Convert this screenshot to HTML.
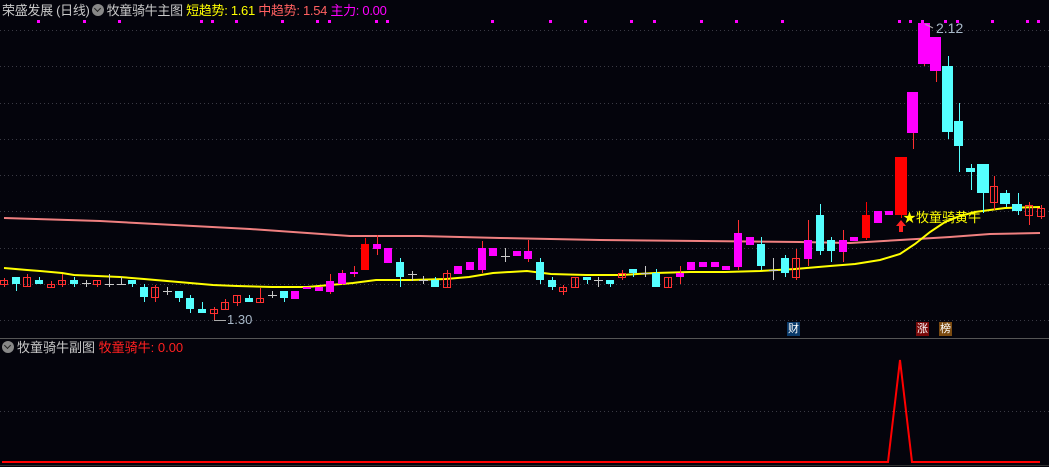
<!DOCTYPE html>
<html><head><meta charset="utf-8"><style>
html,body{margin:0;padding:0;background:#04040c;}
body{width:1049px;height:467px;overflow:hidden;position:relative;font-family:"Liberation Sans","Noto Sans CJK SC",sans-serif;}
.t{position:absolute;font-size:13px;white-space:nowrap;line-height:15px}
.ic{display:inline-block;width:12px;height:12px;border-radius:50%;background:#888;vertical-align:-1px;margin:0 3px 0 2px;position:relative}
.ic:after{content:"";position:absolute;left:3px;top:2px;width:4px;height:4px;border-right:1.5px solid #222;border-bottom:1.5px solid #222;transform:rotate(45deg)}
.mk{position:absolute;width:13px;height:14px;font-size:11px;line-height:14px;text-align:center;color:#fff}
</style></head><body>
<svg width="1049" height="467" style="position:absolute;left:0;top:0">
<g stroke="#3a3a44" stroke-dasharray="1,3" stroke-width="1">
<line x1="0" x2="1049" y1="30.5" y2="30.5"/><line x1="0" x2="1049" y1="66.5" y2="66.5"/><line x1="0" x2="1049" y1="103.5" y2="103.5"/><line x1="0" x2="1049" y1="139.5" y2="139.5"/><line x1="0" x2="1049" y1="175.5" y2="175.5"/><line x1="0" x2="1049" y1="211.5" y2="211.5"/><line x1="0" x2="1049" y1="248.5" y2="248.5"/><line x1="0" x2="1049" y1="284.5" y2="284.5"/><line x1="0" x2="1049" y1="320.5" y2="320.5"/><line x1="0" x2="1049" y1="411.5" y2="411.5"/>
</g>
<line x1="0" x2="1049" y1="338.5" y2="338.5" stroke="#555"/>
<line x1="0" x2="1049" y1="465.5" y2="465.5" stroke="#333"/>
<g fill="#ff00ff">
<rect x="37" y="20" width="3" height="3"/><rect x="83" y="20" width="3" height="3"/><rect x="118" y="20" width="3" height="3"/><rect x="200" y="20" width="3" height="3"/><rect x="211" y="20" width="3" height="3"/><rect x="235" y="20" width="3" height="3"/><rect x="281" y="20" width="3" height="3"/><rect x="316" y="20" width="3" height="3"/><rect x="328" y="20" width="3" height="3"/><rect x="375" y="20" width="3" height="3"/><rect x="386" y="20" width="3" height="3"/><rect x="491" y="20" width="3" height="3"/><rect x="549" y="20" width="3" height="3"/><rect x="584" y="20" width="3" height="3"/><rect x="630" y="20" width="3" height="3"/><rect x="653" y="20" width="3" height="3"/><rect x="700" y="20" width="3" height="3"/><rect x="735" y="20" width="3" height="3"/><rect x="781" y="20" width="3" height="3"/><rect x="898" y="20" width="3" height="3"/><rect x="909" y="20" width="3" height="3"/><rect x="921" y="20" width="3" height="3"/><rect x="944" y="20" width="3" height="3"/><rect x="956" y="20" width="3" height="3"/><rect x="991" y="20" width="3" height="3"/><rect x="1026" y="20" width="3" height="3"/><rect x="1037" y="20" width="3" height="3"/>
</g>
<polyline fill="none" stroke="#f08080" stroke-width="2" points="4,218 100,221 250,229 350,236 420,236 500,238 600,240 700,241 800,242 850,243 900,240 950,237 990,234 1040,233"/>
<polyline fill="none" stroke="#ffff00" stroke-width="2" points="4,268 27,270 40,271 62,273 74,275 97,276 120,277 144,279 167,281 190,283 213,285 237,286 272,287 307,287 330,285 353,283 376,280 411,280 446,279 469,277 493,273 527,271 551,274 586,275 621,275 655,273 690,272 725,272 760,271 795,269 830,266 855,264 880,260 900,254 915,244 930,232 945,222 960,216 975,212 990,210 1005,208 1040,207"/>
<g stroke-width="1">
<g stroke="#ff3030" fill="none">
<line x1="4.5" x2="4.5" y1="278" y2="287"/><rect x="0.5" y="280.5" width="7" height="4"/>
<line x1="27.5" x2="27.5" y1="274" y2="287"/><rect x="23.5" y="277.5" width="7" height="9"/>
<line x1="51.5" x2="51.5" y1="281" y2="287"/><rect x="47.5" y="284.5" width="7" height="3"/>
<line x1="62.5" x2="62.5" y1="274" y2="287"/><rect x="58.5" y="280.5" width="7" height="4"/>
<line x1="97.5" x2="97.5" y1="280" y2="287"/><rect x="93.5" y="280.5" width="7" height="4"/>
<line x1="155.5" x2="155.5" y1="285" y2="302"/><rect x="151.5" y="287.5" width="7" height="10"/>
<line x1="214.5" x2="214.5" y1="307" y2="320"/><rect x="210.5" y="309.5" width="7" height="4"/>
<line x1="225.5" x2="225.5" y1="299" y2="309"/><rect x="221.5" y="302.5" width="7" height="7"/>
<line x1="237.5" x2="237.5" y1="295" y2="306"/><rect x="233.5" y="295.5" width="7" height="7"/>
<line x1="260.5" x2="260.5" y1="288" y2="302"/><rect x="256.5" y="298.5" width="7" height="4"/>
<line x1="447.5" x2="447.5" y1="270" y2="287"/><rect x="443.5" y="273.5" width="7" height="14"/>
<line x1="563.5" x2="563.5" y1="285" y2="295"/><rect x="559.5" y="287.5" width="7" height="4"/>
<line x1="575.5" x2="575.5" y1="277" y2="287"/><rect x="571.5" y="277.5" width="7" height="10"/>
<line x1="622.5" x2="622.5" y1="270" y2="280"/><rect x="618.5" y="273.5" width="7" height="4"/>
<line x1="668.5" x2="668.5" y1="277" y2="287"/><rect x="664.5" y="277.5" width="7" height="10"/>
<line x1="796.5" x2="796.5" y1="249" y2="280"/><rect x="792.5" y="258.5" width="7" height="19"/>
<line x1="994.5" x2="994.5" y1="176" y2="210"/><rect x="990.5" y="186.5" width="7" height="16"/>
<line x1="1029.5" x2="1029.5" y1="202" y2="225"/><rect x="1025.5" y="205.5" width="7" height="10"/>
<line x1="1041.5" x2="1041.5" y1="205" y2="219"/><rect x="1037.5" y="208.5" width="7" height="8"/>
</g>
<g stroke="#ff0000" fill="#ff0000">
<line x1="365.5" x2="365.5" y1="238" y2="270"/><rect x="361.5" y="244.5" width="7" height="25"/>
<line x1="866.5" x2="866.5" y1="202" y2="240"/><rect x="862.5" y="215.5" width="7" height="22"/>
<line x1="901.5" x2="901.5" y1="157" y2="218"/><rect x="895.5" y="157.5" width="11" height="57"/>
</g>
<g stroke="#ff3030"><line x1="342.5" x2="342.5" y1="270" y2="285"/><line x1="377.5" x2="377.5" y1="235" y2="255"/><line x1="482.5" x2="482.5" y1="241" y2="273"/><line x1="528.5" x2="528.5" y1="240" y2="262"/><line x1="680.5" x2="680.5" y1="266" y2="284"/><line x1="738.5" x2="738.5" y1="220" y2="270"/><line x1="808.5" x2="808.5" y1="220" y2="266"/><line x1="843.5" x2="843.5" y1="230" y2="262"/><line x1="913.5" x2="913.5" y1="130" y2="149"/><line x1="924.5" x2="924.5" y1="60" y2="66"/><line x1="936.5" x2="936.5" y1="68" y2="82"/><line x1="330.5" x2="330.5" y1="274" y2="294"/><line x1="354.5" x2="354.5" y1="266" y2="277"/></g>
<g fill="#ff00ff" stroke="none">
<rect x="291" y="291" width="8" height="8"/><rect x="303" y="287" width="8" height="2"/><rect x="315" y="287" width="8" height="4"/><rect x="326" y="281" width="8" height="11"/><rect x="338" y="273" width="8" height="11"/><rect x="350" y="272" width="8" height="2"/><rect x="373" y="244" width="8" height="5"/><rect x="384" y="248" width="8" height="15"/>
<rect x="454" y="266" width="8" height="8"/><rect x="466" y="262" width="8" height="8"/><rect x="478" y="248" width="8" height="22"/><rect x="489" y="248" width="8" height="8"/><rect x="513" y="251" width="8" height="5"/><rect x="524" y="251" width="8" height="8"/>
<rect x="676" y="273" width="8" height="4"/><rect x="687" y="262" width="8" height="8"/><rect x="699" y="262" width="8" height="5"/><rect x="711" y="262" width="8" height="5"/><rect x="722" y="266" width="8" height="4"/><rect x="734" y="233" width="8" height="34"/><rect x="746" y="237" width="8" height="8"/><rect x="804" y="240" width="8" height="19"/><rect x="839" y="240" width="8" height="12"/><rect x="850" y="237" width="8" height="4"/><rect x="874" y="211" width="8" height="12"/><rect x="885" y="211" width="8" height="4"/><rect x="907" y="92" width="11" height="41"/><rect x="918" y="23" width="12" height="41"/><rect x="930" y="37" width="11" height="34"/>
</g>
<g stroke="#55ffff"><line x1="16.5" x2="16.5" y1="277" y2="291"/><line x1="39.5" x2="39.5" y1="277" y2="284"/><line x1="74.5" x2="74.5" y1="277" y2="287"/><line x1="132.5" x2="132.5" y1="280" y2="287"/><line x1="144.5" x2="144.5" y1="284" y2="302"/><line x1="179.5" x2="179.5" y1="291" y2="302"/><line x1="190.5" x2="190.5" y1="295" y2="313"/><line x1="202.5" x2="202.5" y1="302" y2="313"/><line x1="249.5" x2="249.5" y1="295" y2="302"/><line x1="284.5" x2="284.5" y1="291" y2="302"/><line x1="400.5" x2="400.5" y1="258" y2="287"/><line x1="435.5" x2="435.5" y1="277" y2="287"/><line x1="540.5" x2="540.5" y1="258" y2="284"/><line x1="552.5" x2="552.5" y1="277" y2="290"/><line x1="587.5" x2="587.5" y1="277" y2="284"/><line x1="610.5" x2="610.5" y1="280" y2="287"/><line x1="633.5" x2="633.5" y1="269" y2="277"/><line x1="656.5" x2="656.5" y1="269" y2="287"/><line x1="761.5" x2="761.5" y1="237" y2="270"/><line x1="785.5" x2="785.5" y1="255" y2="277"/><line x1="820.5" x2="820.5" y1="204" y2="255"/><line x1="831.5" x2="831.5" y1="237" y2="262"/><line x1="948.5" x2="948.5" y1="56" y2="139"/><line x1="959.5" x2="959.5" y1="103" y2="172"/><line x1="971.5" x2="971.5" y1="164" y2="190"/><line x1="983.5" x2="983.5" y1="164" y2="213"/><line x1="1006.5" x2="1006.5" y1="190" y2="207"/><line x1="1018.5" x2="1018.5" y1="193" y2="215"/></g>
<g fill="#55ffff"><rect x="12" y="277" width="8" height="7"/><rect x="35" y="280" width="8" height="4"/><rect x="70" y="280" width="8" height="4"/><rect x="128" y="280" width="8" height="4"/><rect x="140" y="287" width="8" height="10"/><rect x="175" y="291" width="8" height="7"/><rect x="186" y="298" width="8" height="11"/><rect x="198" y="309" width="8" height="4"/><rect x="245" y="298" width="8" height="4"/><rect x="280" y="291" width="8" height="7"/><rect x="396" y="262" width="8" height="15"/><rect x="431" y="280" width="8" height="7"/><rect x="536" y="262" width="8" height="18"/><rect x="548" y="280" width="8" height="7"/><rect x="583" y="277" width="8" height="3"/><rect x="606" y="280" width="8" height="4"/><rect x="629" y="269" width="8" height="4"/><rect x="652" y="273" width="8" height="14"/><rect x="757" y="244" width="8" height="22"/><rect x="781" y="258" width="8" height="15"/><rect x="816" y="215" width="8" height="36"/><rect x="827" y="240" width="8" height="11"/><rect x="942" y="66" width="11" height="66"/><rect x="954" y="121" width="9" height="25"/><rect x="966" y="168" width="9" height="4"/><rect x="977" y="164" width="12" height="29"/><rect x="1000" y="193" width="10" height="11"/><rect x="1012" y="204" width="10" height="7"/></g>
<g stroke="#c8c8c8"><line x1="86.5" x2="86.5" y1="280" y2="287"/><line x1="82" x2="91" y1="283.5" y2="283.5"/><line x1="109.5" x2="109.5" y1="274" y2="287"/><line x1="105" x2="114" y1="284.5" y2="284.5"/><line x1="121.5" x2="121.5" y1="277" y2="284"/><line x1="117" x2="126" y1="284.5" y2="284.5"/><line x1="167.5" x2="167.5" y1="287" y2="295"/><line x1="163" x2="172" y1="291.5" y2="291.5"/><line x1="272.5" x2="272.5" y1="291" y2="298"/><line x1="268" x2="277" y1="295.5" y2="295.5"/><line x1="412.5" x2="412.5" y1="271" y2="281"/><line x1="408" x2="417" y1="274.5" y2="274.5"/><line x1="423.5" x2="423.5" y1="276" y2="284"/><line x1="419" x2="428" y1="280.5" y2="280.5"/><line x1="505.5" x2="505.5" y1="248" y2="262"/><line x1="501" x2="510" y1="256.5" y2="256.5"/><line x1="598.5" x2="598.5" y1="277" y2="287"/><line x1="594" x2="603" y1="280.5" y2="280.5"/><line x1="645.5" x2="645.5" y1="266" y2="277"/><line x1="641" x2="650" y1="273.5" y2="273.5"/><line x1="773.5" x2="773.5" y1="258" y2="280"/><line x1="769" x2="778" y1="270.5" y2="270.5"/></g>
</g>
<polygon points="901,220 896,226 899,226 899,232 903,232 903,226 906,226" fill="#ff2020"/>
<line x1="925" y1="24" x2="933" y2="28" stroke="#aaa"/>
<line x1="214" y1="320.5" x2="226" y2="320.5" stroke="#aaa"/>
<polyline fill="none" stroke="#ff0000" stroke-width="2" points="2,462 888,462 900,360 912,462 1040,462"/>
</svg>
<div class="t" style="left:2px;top:3px;color:#c8c8c8;letter-spacing:-0.3px">荣盛发展 (日线)<span class="ic"></span>牧童骑牛主图 <span style="color:#ffff00">短趋势: 1.61</span> <span style="color:#ff6060">中趋势: 1.54</span> <span style="color:#ff00ff">主力: 0.00</span></div>
<div class="t" style="left:936px;top:21px;color:#a8b8c8;font-size:14px">2.12</div>
<div class="t" style="left:227px;top:312px;color:#a8b8c8;font-size:13px">1.30</div>
<div class="t" style="left:903px;top:210px;color:#ffff00;font-size:13px">★牧童骑黄牛</div>
<div class="mk" style="left:787px;top:322px;background:#0a3a6a">财</div>
<div class="mk" style="left:916px;top:322px;background:#7a0a0a">涨</div>
<div class="mk" style="left:939px;top:322px;background:#7a4a10">榜</div>
<div class="t" style="left:0px;top:340px;color:#c8c8c8"><span class="ic"></span>牧童骑牛副图 <span style="color:#ff2020">牧童骑牛: 0.00</span></div>
</body></html>
